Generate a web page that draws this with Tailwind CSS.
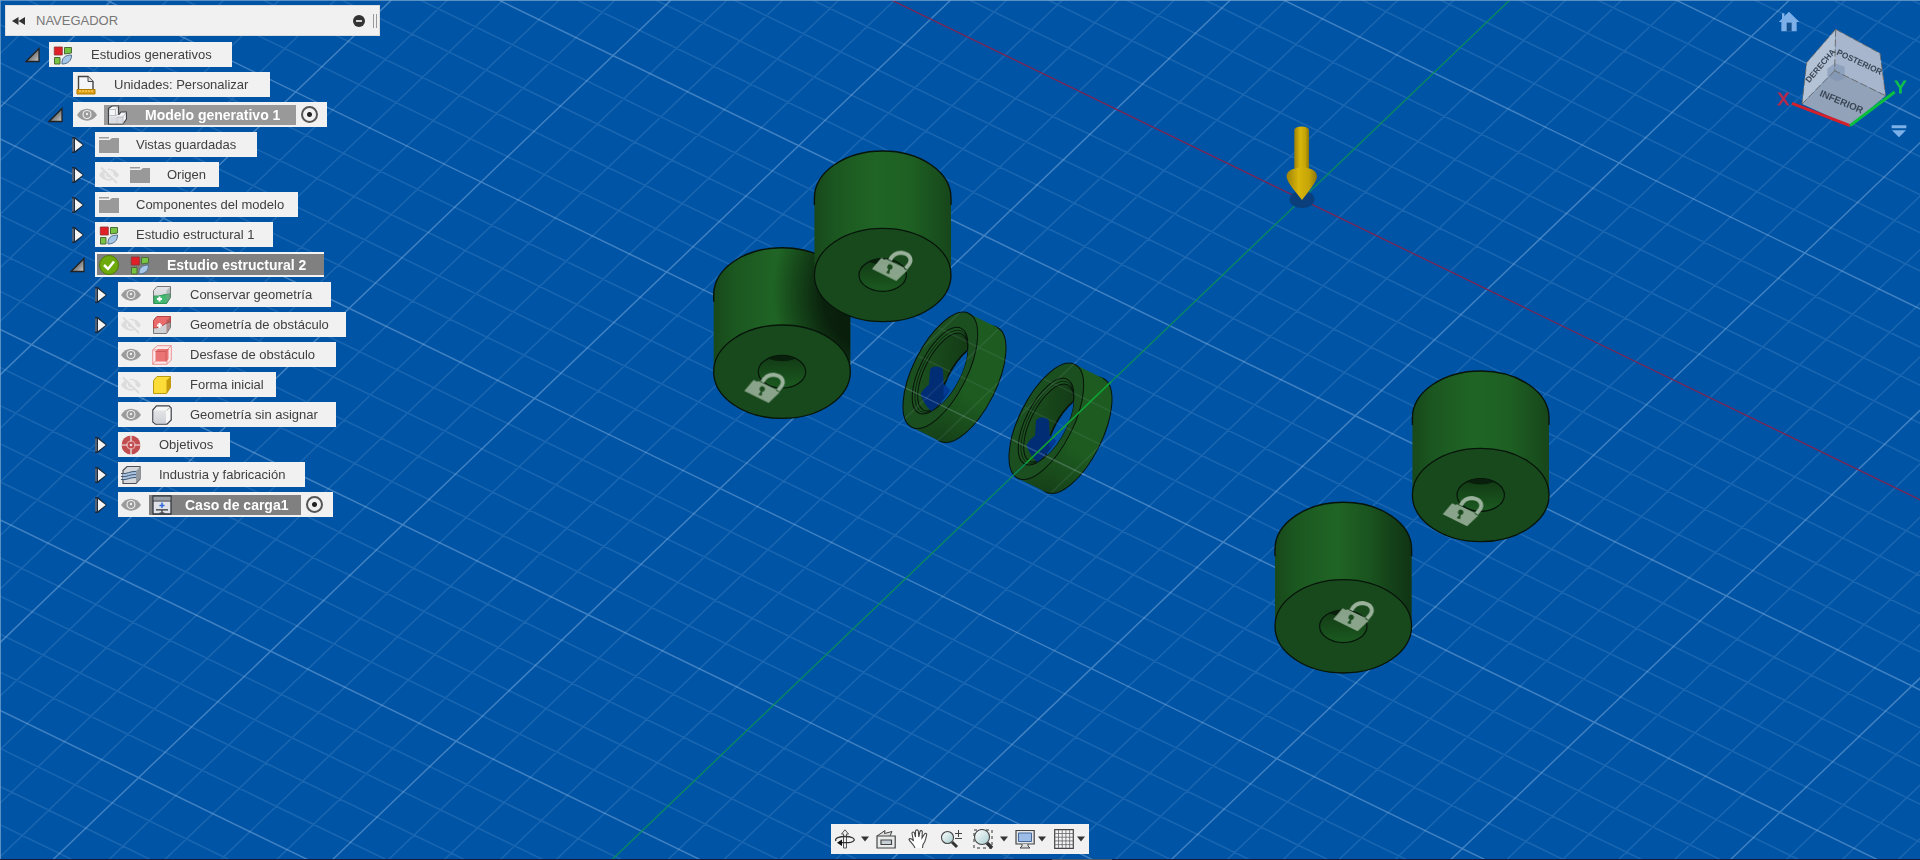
<!DOCTYPE html>
<html lang="es">
<head>
<meta charset="utf-8">
<title>Diseño generativo</title>
<script src="https://cdn.jsdelivr.net/npm/@tailwindcss/browser@4"></script>
</head>
<body class="relative h-screen overflow-hidden bg-[#0054a6] font-['Liberation_Sans',Arial,sans-serif] text-[13px] text-[#404040]">

<!-- Icon library -->
<svg class="absolute size-0" aria-hidden="true">
  <defs>
    <linearGradient id="g-tri" x1="0" y1="0" x2="1" y2="1"><stop offset=".3" stop-color="#555"/><stop offset="1" stop-color="#ccc"/></linearGradient>
    <linearGradient id="g-face" x1="0" y1="0" x2="0" y2="1"><stop offset="0" stop-color="#e3e4e6"/><stop offset="1" stop-color="#cdd0d6"/></linearGradient>
    <linearGradient id="g-lens" x1="0" y1="0" x2="1" y2="1"><stop offset="0" stop-color="#fff"/><stop offset="1" stop-color="#a9cdd0"/></linearGradient>
    <symbol id="i-open" viewBox="0 0 16 16"><path d="M1 14.500L14 1.500V14.500Z" fill="url(#g-tri)" stroke="#222" stroke-width="1.300"/></symbol>
    <symbol id="i-closed" viewBox="0 0 16 16"><path d="M2 0V16H5L14 8L5 0Z" fill="#1b2a3c"/><path d="M5 2V14L12.700 8Z" fill="#f4f4f4"/><path d="M3 1.500V14.500" stroke="#8a9aac"/></symbol>
    <symbol id="i-gen" viewBox="0 0 20 20"><path d="M1.300 2h8v8h-8z" fill="#e01f26" stroke="#8d3030" stroke-width=".8"/><path d="M11.500 2.500h7v5.500l-7 1z" fill="#76c442" stroke="#4b6b3a"/><path d="M1.500 12.500h5.500v6.500h-5.500z" fill="#76c442" stroke="#4b6b3a"/><path d="M9 19C8.500 13 12 10 18.500 10C18.800 15.500 15 19 9 19z" fill="#a5c6e6" stroke="#52708e"/></symbol>
    <symbol id="i-doc" viewBox="0 0 20 20"><path d="M2.500 14V1.500H12L17 6.500V14" fill="#f5f6f8" stroke="#444" stroke-width="1.400"/><path d="M12 1.500V6.500H17" fill="#ddd" stroke="#444"/><path d="M1 14.500h18v4.500H1z" fill="#e0a010" stroke="#b07a00"/><path d="M4 15v2M7 15v2M10 15v2M13 15v2M16 15v2" stroke="#fbe08a"/></symbol>
    <symbol id="i-eye" viewBox="0 0 20 20"><path d="M0 10C5 1.500 15 1.500 20 10C15 17.500 5 17.500 0 10Z" fill="#9b9b9b"/><circle cx="10" cy="9.500" r="4.500" fill="#f1f1f1"/><circle cx="10" cy="9.500" r="3.400" fill="#9b9b9b"/><circle cx="10" cy="9" r="1.200" fill="#eee"/></symbol>
    <symbol id="i-eyeoff" viewBox="0 0 20 20"><path d="M0 10C5 1.500 15 1.500 20 10C15 17.500 5 17.500 0 10Z" fill="#dcdcdc"/><circle cx="10" cy="9.500" r="4.500" fill="#f1f1f1"/><circle cx="10" cy="9.500" r="3" fill="#dcdcdc"/><path d="M2 1L19 17" stroke="#f1f1f1" stroke-width="4"/><path d="M2 2.500L18 18" stroke="#dcdcdc" stroke-width="1.800"/></symbol>
    <symbol id="i-asm" viewBox="0 0 20 20"><path d="M1.500 3.500L5 1H11.500V9.500H12L14 7H19.500V14L16 19H1.500Z" fill="#f4f5f7" stroke="#3e4248" stroke-width="1.200"/><path d="M2.200 11.500h7.300v6.800H2.200zM10.500 12h5.500v6.300h-5.500z" fill="#d9dce1"/><path d="M2 4.500H8.500L11 1.500M8.500 4.500V10.500M2 10.500H9L11.500 9M10 18.500V12H16V18.500M16 12L19 7.500" fill="none" stroke="#aeb1b7" stroke-width=".8"/></symbol>
    <symbol id="i-folder" viewBox="0 0 20 20"><path d="M0 2h10v1.500H0z" fill="#9c9c9c"/><path d="M0 5H10.500L13 3H20V18H0Z" fill="#999"/></symbol>
    <symbol id="i-check" viewBox="0 0 20 20"><circle cx="10" cy="10" r="9.500" fill="#6eaa0c" stroke="#4d7b05"/><path d="M5 10L9 14L15 6.500" fill="none" stroke="#fff" stroke-width="2.500"/></symbol>
    <symbol id="i-keep" viewBox="0 0 20 20"><path d="M1.500 5.500L5 1.500H18.500V12.500L14.500 18.500H1.500Z" fill="url(#g-face)" stroke="#777"/><path d="M2 11C8 12 11 9 18 9V12.500L14.500 18.500H2Z" fill="#43b870" stroke="#2c9656"/><path d="M14.500 5.500L18 2V12.500L14.500 18Z" fill="#8a9a92" opacity=".5"/><path d="M7.500 11.500v5M5 14h5" stroke="#fff" stroke-width="2"/></symbol>
    <symbol id="i-obst" viewBox="0 0 20 20"><path d="M1.500 5.500L5 1.500H18.500V12.500L14.500 18.500H1.500Z" fill="#cfd1d4" stroke="#777"/><path d="M1.500 5.500L5 1.500H18.500V7C12 8 10 13 1.500 13Z" fill="#ea6b6b" stroke="#b84545"/><path d="M14.500 5.500L18 2V12.500L14.500 18Z" fill="#8d4a4a" opacity=".5"/><path d="M7.500 8v5M5 10.500h5" stroke="#fff" stroke-width="2"/></symbol>
    <symbol id="i-offset" viewBox="0 0 20 20"><path d="M.7 5L5 .7H19.300V15L15 19.300H.7Z M.7 5H15V19.300M15 5L19.300 .7M.7 19.300L3.500 16" fill="#fbe9e9" stroke="#ea8a8a" stroke-width=".9"/><path d="M3.500 6.500L6 4H16.500V14L14 16.500H3.500Z" fill="#ea7373"/><path d="M3.500 6.500H14V16.500M14 6.500L16.500 4" fill="none" stroke="#c95454" stroke-width=".8"/></symbol>
    <symbol id="i-form" viewBox="0 0 20 20"><path d="M1.500 5.500L5 1.500H18.500V12.500L14.500 18.500H1.500Z" fill="#fcdc36" stroke="#bb9a10"/><path d="M14.500 5.500L18.500 1.500V12.500L14.500 18.500Z" fill="#c69c0b"/></symbol>
    <symbol id="i-body" viewBox="0 0 20 20"><path d="M.8 5L4.500 .8H17L19.200 3V15L15 19.200H3.500L.8 17Z" fill="#f7f7f8" stroke="#3e4248" stroke-width="1.200"/><path d="M2 5.500H14V18.500H4L2 16.500Z" fill="url(#g-face)"/><path d="M14.500 5.500L18.500 2" stroke="#999" stroke-width=".8"/></symbol>
    <symbol id="i-goal" viewBox="0 0 20 20"><circle cx="10" cy="10" r="9.500" fill="#c24d50"/><circle cx="10" cy="10" r="4" fill="none" stroke="#e9a9a9" stroke-width="1.200"/><path d="M10 0V6.500M10 13.500V20M0 10H6.500M13.500 10H20" stroke="#f1f1f1" stroke-width="1.200"/><circle cx="10" cy="10" r="1.300" fill="#f6dede"/></symbol>
    <symbol id="i-fab" viewBox="0 0 20 20"><path d="M2 5.500L6 1.500H19V14L15 18.500H2Z" fill="#d4d8dc" stroke="#4c5055" stroke-width="1.200"/><path d="M15 6L19 2V14L15 18Z" fill="#93999f"/><path d="M2 8C7 9 10 5 15 6V13C10 13 7 15 2 15Z" fill="#a8c4e4"/><path d="M0 8.500C6 9.500 9 6 15 6.500M0 11.500C6 12.500 9 9 15 9.500M0 14.500C6 15.500 9 12 15 12.500" fill="none" stroke="#46596e"/></symbol>
    <symbol id="i-load" viewBox="0 0 20 20"><path d="M1 1h18v18H1z" fill="#dfe3e9" stroke="#33373d" stroke-width="1.300"/><path d="M2 2h16v3.500H2z" fill="#999fa6"/><path d="M1 6h18" stroke="#33373d"/><path d="M10 7.500V13M7.500 10.500H12.500" fill="none" stroke="#2c66d8" stroke-width="1.400"/><path d="M4 14.800h12M10 15v3M7.500 18h5" stroke="#333" stroke-width="1.200"/></symbol>
    <symbol id="i-caret" viewBox="0 0 8 6"><path d="M0 .5H8L4 5.500Z" fill="#333"/></symbol>
    <symbol id="lock" viewBox="0 -30 120 105" overflow="visible">
      <path d="M54 6C60 -6 72 -16 88 -16C112 -13 122 2 111 19L101 31" fill="none" stroke="#a2b8a3" stroke-width="12"/>
      <path d="M0 33L24 4L29 0L38 5L42 3L97 29L96 32L106 37L73 69Z" fill="#90aa91"/>
      <path d="M58 20a8 8 0 1 0 -8 14l-8 10l10 4l2-13a8 8 0 0 0 4-15z" fill="#1b4a1e"/>
    </symbol>
    <linearGradient id="g-side"><stop offset="0" stop-color="#18481b"/><stop offset=".15" stop-color="#1b5720"/><stop offset=".45" stop-color="#206525"/><stop offset=".7" stop-color="#1e6023"/><stop offset="1" stop-color="#17461b"/></linearGradient>
    <linearGradient id="g-hole" x1="0" y1="0" x2="0" y2="1"><stop offset="0" stop-color="#123914"/><stop offset="1" stop-color="#1b5a20"/></linearGradient>
    <linearGradient id="g-shade"><stop offset=".45" stop-color="#06180a" stop-opacity="0"/><stop offset="1" stop-color="#06180a" stop-opacity=".4"/></linearGradient>
    <radialGradient id="g-shadow"><stop offset=".45" stop-color="#041006" stop-opacity=".75"/><stop offset="1" stop-color="#041006" stop-opacity="0"/></radialGradient>
    <linearGradient id="g-ring" x1="0" y1="0" x2="0" y2="1"><stop offset=".6" stop-color="#1d5b20"/><stop offset="1" stop-color="#164018"/></linearGradient>
    <linearGradient id="g-bore" x1="1" y1="0" x2="0" y2="1"><stop offset="0" stop-color="#123714"/><stop offset="1" stop-color="#1d5420"/></linearGradient>
    <linearGradient id="g-gold"><stop offset="0" stop-color="#9c8108"/><stop offset=".4" stop-color="#d8b60a"/><stop offset=".75" stop-color="#c4a408"/><stop offset="1" stop-color="#8d7406"/></linearGradient>
    <clipPath id="c-hole"><ellipse rx="23.700" ry="16.300"/></clipPath>
    <path id="body" d="M-68.300 0V-77A68.300 47 0 0 1 68.300 -77V0A68.300 47 0 0 1 -68.300 0Z"/>
    <clipPath id="c-body"><use href="#body"/></clipPath>
    <!-- Cylinder, origin at the centre of its lower face -->
    <g id="cyl-side">
      <use href="#body" fill="url(#g-side)"/>
      <path d="M-68.300 -70V-77A68.300 47 0 0 1 68.300 -77V-70" fill="none" stroke="#07140a" stroke-width="1.400"/>
    </g>
    <g id="cyl-face">
      <ellipse rx="68.300" ry="46.700" fill="#18491c" stroke="#07140a" stroke-width="1.300"/>
      <ellipse rx="23.700" ry="16.300" fill="url(#g-hole)" stroke="#07140a" stroke-width="1.200"/>
      <ellipse cy="-17" rx="17" ry="6.500" fill="#08200b" clip-path="url(#c-hole)"/>
    </g>
    <!-- Ring, drawn at three times its size -->
    <clipPath id="c-in"><ellipse cx="158" cy="216" rx="54" ry="128" transform="rotate(26.700 158 216)"/></clipPath>
    <g id="ring" stroke-width="3">
      <ellipse cx="236" cy="253" rx="80.600" ry="191" transform="rotate(26.700 236 253)" fill="url(#g-ring)" stroke="#07140a"/>
      <path d="M236.600 40.200L321.600 82.200L150.400 423.800L65.400 381.800Z" fill="url(#g-ring)"/>
      <ellipse cx="151" cy="211" rx="80.600" ry="191" transform="rotate(26.700 151 211)" fill="#1c4f1f" stroke="#07140a"/>
      <ellipse cx="150" cy="212" rx="60" ry="142" transform="rotate(26.700 150 212)" fill="#1d5220" stroke="#07140a"/>
      <ellipse cx="154" cy="214" rx="57" ry="135" transform="rotate(26.700 154 214)" fill="none" stroke="#07140a" stroke-width="2"/>
      <ellipse cx="158" cy="216" rx="54" ry="128" transform="rotate(26.700 158 216)" fill="url(#g-bore)" stroke="#07140a"/>
      <g clip-path="url(#c-in)"><ellipse cx="224" cy="250" rx="54" ry="126" transform="rotate(26.700 224 250)" fill="#0054a6" stroke="#07140a" stroke-width="5"/></g>
      <path d="M120 210A20 13 0 0 1 159 210L161 252C168 258 174 265 180 270C168 290 145 320 124 334C108 320 98 300 92 284C98 268 108 260 117 254Z" fill="#002d74"/>
      <path d="M161 256L181 270L160 292Z" fill="#003a94"/>
    </g>
  </defs>
</svg>

<!-- Modelling canvas -->
<main class="absolute inset-0">
  <svg class="size-full" viewBox="0 0 1920 860" preserveAspectRatio="xMidYMid slice" role="img" aria-label="Vista del modelo generativo">
    <defs>
      <path id="hull" d="M981.900 313.400L997.200 327.400C1020 345 998 420 964 434C950 446 935 444 911.800 427.300C895 415 905 380 922 350C940 320 960 305 981.900 313.400Z"/>
      <clipPath id="c-rings">
        <use href="#hull"/>
        <use href="#hull" x="106" y="51"/>
      </clipPath>
      <g id="grid" fill="none" stroke="#cfe6ff">
        <path id="minor" vector-effect="non-scaling-stroke" stroke-opacity=".12" stroke-width="1.600" transform="matrix(37.108 18.010 26.400 -25.280 1301.700 199.300)"/>
        <path id="major" vector-effect="non-scaling-stroke" stroke-opacity=".31" stroke-width="1.500" transform="matrix(37.108 18.010 26.400 -25.280 1301.700 199.300)"/>
      </g>
    </defs>
    <use href="#grid"/>
    <path d="M560 -161L2043 559.500" stroke="#7c2452" stroke-width="1.300"/>

    <use href="#cyl-side" x="782" y="371.700"/>
    <g transform="translate(782 371.700)" clip-path="url(#c-body)"><ellipse cx="82" cy="-78" rx="92" ry="112" fill="url(#g-shadow)"/></g>
    <use href="#cyl-face" x="782" y="371.700"/>
    <use href="#cyl-side" x="882.700" y="275"/>
    <use href="#cyl-face" x="882.700" y="275"/>
    <use href="#cyl-side" x="1480.700" y="495"/>
    <use href="#cyl-face" x="1480.700" y="495"/>
    <use href="#cyl-side" x="1343.300" y="626.300"/>
    <g transform="translate(1343.300 626.300)" clip-path="url(#c-body)"><path d="M-69 -130H69V0H-69Z" fill="url(#g-shade)"/></g>
    <use href="#cyl-face" x="1343.300" y="626.300"/>

    <g opacity=".95">
      <use href="#lock" x="872" y="248" width="40" height="35"/>
      <use href="#lock" x="744.300" y="370" width="40" height="35"/>
      <use href="#lock" x="1442.700" y="493.300" width="40" height="35"/>
      <use href="#lock" x="1333.300" y="598.300" width="40" height="35"/>
    </g>

    <use href="#ring" transform="translate(890 300) scale(.3333)"/>
    <use href="#ring" transform="translate(996 351) scale(.3333)"/>
    <g clip-path="url(#c-rings)" opacity=".7"><use href="#grid"/></g>
    <path d="M1565.700 -53.500L575 895.100" stroke="#088c5c" stroke-width="1.300"/>
    <path d="M1111 381.900L1026 463.300" stroke="#12a030" stroke-width="1.500"/>

    <ellipse cx="1302" cy="199.300" rx="12.500" ry="8.700" fill="#0a3f7c"/>
    <path d="M1294.300 130A7.300 3.500 0 0 1 1309 130V168H1294.300Z" fill="url(#g-gold)"/>
    <path d="M1286.500 177C1286.500 170 1294 167.500 1302 167.500C1310 167.500 1317 170 1317 177C1316 183 1308 192 1302 200C1296 192 1288 184 1286.500 177Z" fill="url(#g-gold)"/>

    <path d="M0 .5H1920M.5 0V860" stroke="#6f9fcb" stroke-opacity=".8"/>
    <path d="M0 859.500H1920" stroke="#1a1838"/>
    <path d="M1052 859.500H1112" stroke="#4d5664"/>
  </svg>
</main>

<!-- Browser panel -->
<aside class="relative w-[400px]" aria-label="Navegador">
  <header class="mt-[5px] ml-[5px] flex h-[31px] w-[375px] items-center border border-[#dcdcdc] bg-[#f1f1f1] pl-1.5">
    <button aria-label="Contraer navegador"><svg class="h-[10px] w-[13px]" viewBox="0 0 13 10"><path d="M6.500 1V9L0 5ZM13 1V9L6.500 5Z" fill="#333"/></svg></button>
    <h1 class="ml-[11px] flex-1 text-[#777]">NAVEGADOR</h1>
    <button class="mr-2" aria-label="Minimizar"><svg class="size-3" viewBox="0 0 12 12"><circle cx="6" cy="6" r="6" fill="#333"/><path d="M3 6H9" stroke="#fff" stroke-width="1.600"/></svg></button>
    <span class="mr-0.5 h-[14px] w-1 border-x border-[#999]"></span>
  </header>

  <ul class="mt-[6px] flex flex-col gap-[5px]">
    <li class="flex items-center pl-[25px]">
      <button class="mr-2" aria-label="Contraer"><svg class="size-4"><use href="#i-open"/></svg></button>
      <div class="flex h-[25px] w-[183px] items-center bg-[#f1f1f1] pl-1"><svg class="mr-[18px] size-5"><use href="#i-gen"/></svg><span>Estudios generativos</span></div>
    </li>
    <li class="flex items-center pl-[73px]">
      <div class="flex h-[25px] w-[197px] items-center bg-[#f1f1f1] pl-[3px]"><svg class="mr-[18px] size-5"><use href="#i-doc"/></svg><span>Unidades: Personalizar</span></div>
    </li>
    <li class="flex items-center pl-[48px]">
      <button class="mr-[9px]" aria-label="Contraer"><svg class="size-4"><use href="#i-open"/></svg></button>
      <div class="flex h-[25px] w-[254px] items-center bg-[#f1f1f1] pl-1">
        <button class="mr-[7px]" aria-label="Visibilidad"><svg class="size-5"><use href="#i-eye"/></svg></button>
        <label for="modelo" class="flex h-5 w-[192px] items-center bg-[#999] pl-[3px] text-sm font-bold text-white"><svg class="mr-[18px] size-5"><use href="#i-asm"/></svg>Modelo generativo 1</label>
        <input id="modelo" name="modelo" type="radio" checked class="ml-[5px] size-[17px] appearance-none rounded-full border-2 border-[#555] bg-[radial-gradient(circle,#222_2px,transparent_3px)]">
      </div>
    </li>
    <li class="flex items-center pl-[70px]">
      <button class="mr-[9px]" aria-label="Expandir"><svg class="size-4"><use href="#i-closed"/></svg></button>
      <div class="flex h-[25px] w-[162px] items-center bg-[#f1f1f1] pl-1"><svg class="mr-[17px] size-5"><use href="#i-folder"/></svg><span>Vistas guardadas</span></div>
    </li>
    <li class="flex items-center pl-[70px]">
      <button class="mr-[9px]" aria-label="Expandir"><svg class="size-4"><use href="#i-closed"/></svg></button>
      <div class="flex h-[25px] w-[124px] items-center bg-[#f1f1f1] pl-1"><button class="mr-[11px]" aria-label="Visibilidad"><svg class="size-5"><use href="#i-eyeoff"/></svg></button><svg class="mr-[17px] size-5"><use href="#i-folder"/></svg><span>Origen</span></div>
    </li>
    <li class="flex items-center pl-[70px]">
      <button class="mr-[9px]" aria-label="Expandir"><svg class="size-4"><use href="#i-closed"/></svg></button>
      <div class="flex h-[25px] w-[203px] items-center bg-[#f1f1f1] pl-1"><svg class="mr-[17px] size-5"><use href="#i-folder"/></svg><span>Componentes del modelo</span></div>
    </li>
    <li class="flex items-center pl-[70px]">
      <button class="mr-[9px]" aria-label="Expandir"><svg class="size-4"><use href="#i-closed"/></svg></button>
      <div class="flex h-[25px] w-[178px] items-center bg-[#f1f1f1] pl-1"><svg class="mr-[17px] size-5"><use href="#i-gen"/></svg><span>Estudio estructural 1</span></div>
    </li>
    <li class="flex items-center pl-[70px]">
      <button class="mr-[9px]" aria-label="Contraer"><svg class="size-4"><use href="#i-open"/></svg></button>
      <div class="flex h-[25px] w-[229px] items-center border-y-2 border-l-2 border-[#f4f4f4] bg-[#808080] pl-0.5 text-sm font-bold text-white"><svg class="mr-[11px] size-5"><use href="#i-check"/></svg><svg class="mr-[17px] size-5"><use href="#i-gen"/></svg><span>Estudio estructural 2</span></div>
    </li>
    <li class="flex items-center pl-[93px]">
      <button class="mr-[9px]" aria-label="Expandir"><svg class="size-4"><use href="#i-closed"/></svg></button>
      <div class="flex h-[25px] w-[213px] items-center bg-[#f1f1f1] pl-[3px]"><button class="mr-[11px]" aria-label="Visibilidad"><svg class="size-5"><use href="#i-eye"/></svg></button><svg class="mr-[18px] size-5"><use href="#i-keep"/></svg><span>Conservar geometría</span></div>
    </li>
    <li class="flex items-center pl-[93px]">
      <button class="mr-[9px]" aria-label="Expandir"><svg class="size-4"><use href="#i-closed"/></svg></button>
      <div class="flex h-[25px] w-[228px] items-center bg-[#f1f1f1] pl-[3px]"><button class="mr-[11px]" aria-label="Visibilidad"><svg class="size-5"><use href="#i-eyeoff"/></svg></button><svg class="mr-[18px] size-5"><use href="#i-obst"/></svg><span>Geometría de obstáculo</span></div>
    </li>
    <li class="flex items-center pl-[118px]">
      <div class="flex h-[25px] w-[218px] items-center bg-[#f1f1f1] pl-[3px]"><button class="mr-[11px]" aria-label="Visibilidad"><svg class="size-5"><use href="#i-eye"/></svg></button><svg class="mr-[18px] size-5"><use href="#i-offset"/></svg><span>Desfase de obstáculo</span></div>
    </li>
    <li class="flex items-center pl-[118px]">
      <div class="flex h-[25px] w-[158px] items-center bg-[#f1f1f1] pl-[3px]"><button class="mr-[11px]" aria-label="Visibilidad"><svg class="size-5"><use href="#i-eyeoff"/></svg></button><svg class="mr-[18px] size-5"><use href="#i-form"/></svg><span>Forma inicial</span></div>
    </li>
    <li class="flex items-center pl-[118px]">
      <div class="flex h-[25px] w-[218px] items-center bg-[#f1f1f1] pl-[3px]"><button class="mr-[11px]" aria-label="Visibilidad"><svg class="size-5"><use href="#i-eye"/></svg></button><svg class="mr-[18px] size-5"><use href="#i-body"/></svg><span>Geometría sin asignar</span></div>
    </li>
    <li class="flex items-center pl-[93px]">
      <button class="mr-[9px]" aria-label="Expandir"><svg class="size-4"><use href="#i-closed"/></svg></button>
      <div class="flex h-[25px] w-[112px] items-center bg-[#f1f1f1] pl-[3px]"><svg class="mr-[18px] size-5"><use href="#i-goal"/></svg><span>Objetivos</span></div>
    </li>
    <li class="flex items-center pl-[93px]">
      <button class="mr-[9px]" aria-label="Expandir"><svg class="size-4"><use href="#i-closed"/></svg></button>
      <div class="flex h-[25px] w-[187px] items-center bg-[#f1f1f1] pl-[3px]"><svg class="mr-[18px] size-5"><use href="#i-fab"/></svg><span>Industria y fabricación</span></div>
    </li>
    <li class="flex items-center pl-[93px]">
      <button class="mr-[9px]" aria-label="Expandir"><svg class="size-4"><use href="#i-closed"/></svg></button>
      <div class="flex h-[25px] w-[215px] items-center bg-[#f1f1f1] pl-[3px]">
        <button class="mr-2" aria-label="Visibilidad"><svg class="size-5"><use href="#i-eye"/></svg></button>
        <label for="caso" class="flex h-5 w-[152px] items-center bg-[#808080] pl-[3px] text-sm font-bold text-white"><svg class="mr-[13px] size-5"><use href="#i-load"/></svg>Caso de carga1</label>
        <input id="caso" name="caso" type="radio" checked class="ml-[5px] size-[17px] appearance-none rounded-full border-2 border-[#555] bg-[radial-gradient(circle,#222_2px,transparent_3px)]">
      </div>
    </li>
  </ul>
</aside>

<!-- View cube -->
<nav class="absolute top-0 right-0 h-[150px] w-[180px]" aria-label="Cubo de vistas">
  <svg class="size-full" viewBox="0 0 540 450">
    <path d="M147 35L178 66H170V94H124V66H116L126 56V40H133V49Z" fill="#7db0e8"/>
    <path d="M140 94V68H155V94Z" fill="#12508f"/>
    <path d="M287 88L200 188L186 312L284 212Z" fill="#b4c2d6"/>
    <path d="M287 88L420 160L437 287L284 212Z" fill="#a7b6cc"/>
    <path d="M284 212L437 287L330 377L186 312Z" fill="#92a3b9"/>
    <path d="M262 206L284 190L314 200V236L290 244L262 230Z" fill="#7d93b3" opacity=".6"/>
    <path d="M287 88L420 160L437 287M287 88L200 188L186 312M287 88L284 212L437 287M284 212L186 312" fill="none" stroke="#6a6660" stroke-width="2.500" stroke-dasharray="22 8"/>
    <g fill="#3a4656" font-family="Liberation Sans, Arial, sans-serif" font-weight="bold">
      <text x="288" y="163" font-size="25" transform="rotate(25 288 163)">POSTERIOR</text>
      <text x="237" y="287" font-size="29" transform="rotate(23 237 287)">INFERIOR</text>
      <text x="208" y="250" font-size="25" transform="rotate(-50 208 250)">DERECHA</text>
    </g>
    <path d="M156 310L330 377" stroke="#d3202a" stroke-width="9"/>
    <path d="M330 377L464 276" stroke="#0abf3c" stroke-width="9"/>
    <g font-family="Liberation Sans, Arial, sans-serif" font-size="51" stroke-width="3">
      <text x="113" y="316" fill="#b72a4c" stroke="#b72a4c">X</text>
      <text x="464" y="278" fill="#0fc24a" stroke="#0fc24a">Y</text>
    </g>
    <path d="M455 376H499V385H455ZM456 391H498L477 412Z" fill="#7db0e8"/>
  </svg>
</nav>

<!-- Navigation toolbar -->
<div class="absolute bottom-[6px] left-1/2 flex h-[30px] w-[258px] -translate-x-1/2 items-center bg-[#f1f1f1] pl-1" role="toolbar" aria-label="Navegación">
  <button aria-label="Órbita"><svg class="size-5" viewBox="0 0 20 20"><path d="M8.500 19V5H6.500L10 .8L13.500 5H11.500V19Z" fill="#eee" stroke="#555"/><path d="M1 12C-1 9 5 7.500 10 7.500C17 7.500 20 9.500 19 11.500C18 13.500 12 14 5 13.500" fill="none" stroke="#333" stroke-width="1.300"/><path d="M7 10.500V17L2 13.700Z" fill="#111"/></svg></button>
  <button class="ml-1.5" aria-label="Opciones de órbita"><svg class="h-[6px] w-2"><use href="#i-caret"/></svg></button>
  <button class="ml-[7px]" aria-label="Mirar a"><svg class="size-5" viewBox="0 0 20 20"><path d="M1 7L9 1.500L8.500 4.500L16 2.500L14 7" fill="#ddd" stroke="#444"/><path d="M1 7H19.200V19H1Z" fill="#e9eaeb" stroke="#444" stroke-width="1.200"/><path d="M5 11H15.500V15.500H5Z" fill="#c7cfd6" stroke="#444" stroke-width="1.200"/></svg></button>
  <button class="ml-3" aria-label="Encuadre"><svg class="size-5" viewBox="0 0 20 20"><path d="M7 19C5.500 15 2 13 1 10.500C1.500 9 4 9.500 5.500 12L4 4.500C4 2.500 6 2.500 6.500 4.200L7.500 8L7.500 2C8 .5 10 .5 10.300 2L10.800 8L12 2.500C12.500 1 14.500 1.500 14.300 3L14 9L16.500 5C17.500 3.500 19.300 4.500 18.500 6.500C17.500 10 17.500 13 15 15.500L14.500 19" fill="#fff" stroke="#444" stroke-width="1.100"/></svg></button>
  <button class="ml-3" aria-label="Zoom"><svg class="h-5 w-[22px]" viewBox="0 0 22 20"><path d="M12 13L17 18" stroke="#333" stroke-width="3"/><circle cx="7.500" cy="8.500" r="6" fill="url(#g-lens)" stroke="#444" stroke-width="1.100"/><path d="M15 4.500H22M18.500 1V8M15 9.500H22" stroke="#444"/></svg></button>
  <button class="ml-[11px]" aria-label="Zoom ventana"><svg class="size-5" viewBox="0 0 20 20"><path d="M1 1H19V19H1Z" fill="none" stroke="#333" stroke-dasharray="3 3"/><path d="M14 14L19 19" stroke="#333" stroke-width="3.500"/><circle cx="9" cy="8" r="7.500" fill="url(#g-lens)" stroke="#444" stroke-width="1.100"/></svg></button>
  <button class="ml-[7px]" aria-label="Opciones de zoom"><svg class="h-[6px] w-2"><use href="#i-caret"/></svg></button>
  <button class="ml-[7px]" aria-label="Visualización"><svg class="size-5" viewBox="0 0 20 20"><path d="M1 1.500H19.200V15H1Z" fill="#e3e5e8" stroke="#444" stroke-width="1.200"/><path d="M3.500 4H16.500V12.500H3.500Z" fill="#9dbde8" stroke="#456a9a"/><path d="M7 15V17L5 19H15L13 17V15" fill="#ddd" stroke="#444"/></svg></button>
  <button class="ml-[3px]" aria-label="Opciones de visualización"><svg class="h-[6px] w-2"><use href="#i-caret"/></svg></button>
  <button class="ml-2" aria-label="Rejilla"><svg class="size-5" viewBox="0 0 20 20"><path d="M.7 .7H19.300V19.300H.7Z" fill="#f4f4f6" stroke="#444" stroke-width="1.200"/><path d="M4.500 1V19M8.200 1V19M11.900 1V19M15.600 1V19M1 4.500H19M1 8.200H19M1 11.900H19M1 15.600H19" stroke="#666" stroke-width=".8"/></svg></button>
  <button class="ml-[3px]" aria-label="Opciones de rejilla"><svg class="h-[6px] w-2"><use href="#i-caret"/></svg></button>
</div>

<script>
  // Ground grid in cell units: five minor cells to each major cell.
  let minor = '', major = '';
  for (let i = -40; i <= 40; i++) {
    const d = `M${i} -45V45M-45 ${i}H45`;
    if (i % 5) minor += d; else major += i ? d : '';
  }
  document.getElementById('minor').setAttribute('d', minor);
  document.getElementById('major').setAttribute('d', major);
</script>
</body>
</html>
